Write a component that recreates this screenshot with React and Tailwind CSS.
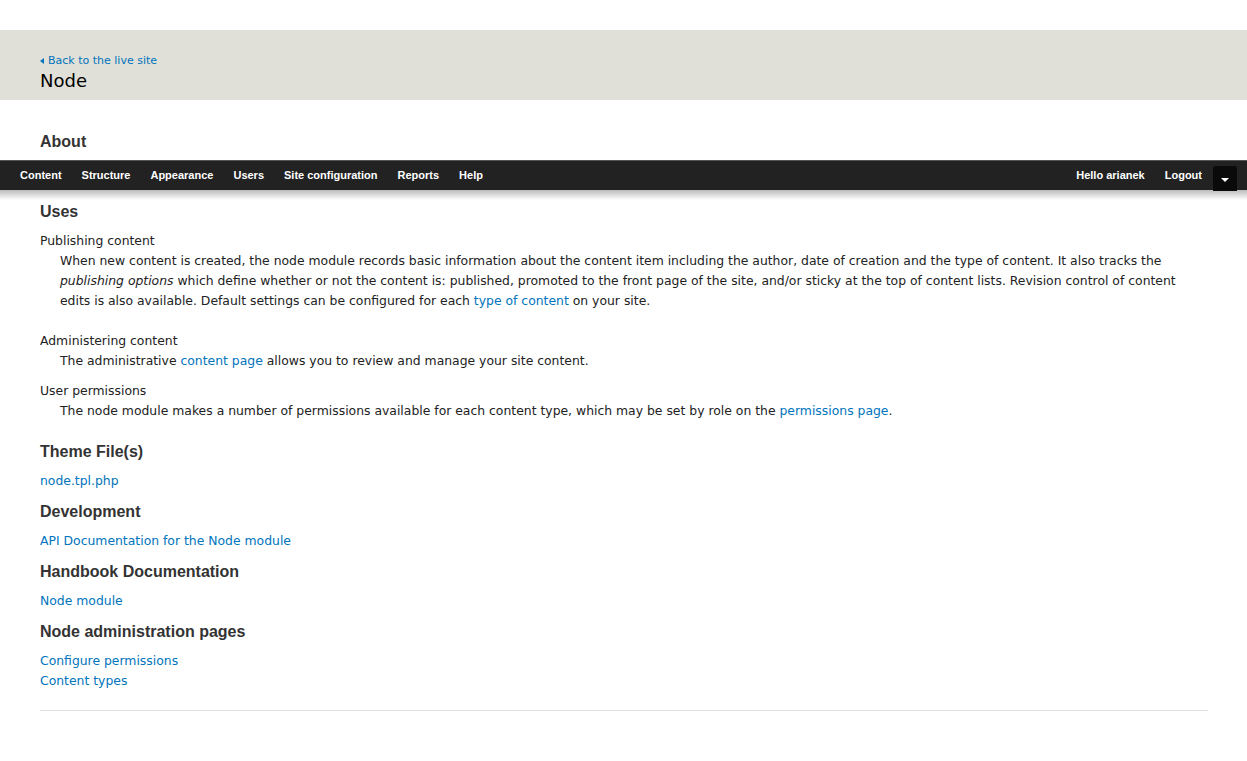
import React from 'react';

const font = { fontFamily: '"DejaVu Sans", "Liberation Sans", sans-serif' };
const headFont = { fontFamily: '"Liberation Sans", Arial, sans-serif' };

function Section({ title, children }) {
  return (
    <div>
      <h2 className="text-[16px] font-bold text-[#333] leading-[20px] mb-[9px]" style={headFont}>{title}</h2>
      {children}
    </div>
  );
}

export default function App() {
  const navItems = ['Content', 'Structure', 'Appearance', 'Users', 'Site configuration', 'Reports', 'Help'];

  return (
    <div className="min-h-screen bg-white text-[#222] text-[12.4px]" style={font}>
      <div className="h-[30px]" />
      {/* page header */}
      <div className="bg-[#e0e0d8] h-[70px] px-[40px] pt-[24px]">
        <a href="#" className="flex items-center gap-[4px] text-[11px] leading-[14px] text-[#0074bd]">
          <span className="inline-block w-0 h-0 border-y-[3.5px] border-y-transparent border-r-[4px] border-r-[#0074bd]" />
          Back to the live site
        </a>
        <h1 className="text-[18px] leading-[24px] mt-[1px] text-black">Node</h1>
      </div>

      <div className="px-[40px] pt-[32px] pb-[8px]">
        <h2 className="text-[16px] font-bold text-[#333] leading-[20px]" style={headFont}>About</h2>
      </div>

      {/* toolbar */}
      <div className="relative">
        <div className="h-[30px] bg-[#222] border-t border-[#555] flex items-center justify-between pl-[20px] pr-[10px]" style={headFont}>
          <ul className="flex gap-[20px] text-white font-bold text-[11px]">
            {navItems.map((n) => (
              <li key={n}>{n}</li>
            ))}
          </ul>
          <div className="flex items-center h-full text-white font-bold text-[11px]">
            <span className="mr-[20px]">Hello arianek</span>
            <span className="mr-[11px]">Logout</span>
            <div className="w-[24px] h-[25px] mt-[5px] bg-[#0a0a0a] rounded-t-[3px] flex items-center justify-center">
              <span className="inline-block mt-[3px] w-0 h-0 border-x-[4px] border-x-transparent border-t-[4px] border-t-white" />
            </div>
          </div>
        </div>
        <div className="h-[10px] bg-gradient-to-b from-[#bbb] to-white" />
      </div>

      <div className="px-[40px] pt-[2px]">
        <h2 className="text-[16px] font-bold text-[#333] leading-[20px] mb-[9px]" style={headFont}>Uses</h2>
        <dl className="leading-[20px]">
          <dt>Publishing content</dt>
          <dd className="pl-[20px] mb-[20px]">
            When new content is created, the node module records basic information about the content item including the author, date of creation and the type of content. It also tracks the <em>publishing options</em> which define whether or not the content is: published, promoted to the front page of the site, and/or sticky at the top of content lists. Revision control of content edits is also available. Default settings can be configured for each <a href="#" className="text-[#0074bd]">type of content</a> on your site.
          </dd>
          <dt>Administering content</dt>
          <dd className="pl-[20px] mb-[10px]">
            The administrative <a href="#" className="text-[#0074bd]">content page</a> allows you to review and manage your site content.
          </dd>
          <dt>User permissions</dt>
          <dd className="pl-[20px]">
            The node module makes a number of permissions available for each content type, which may be set by role on the <a href="#" className="text-[#0074bd]">permissions page</a>.
          </dd>
        </dl>

        <div className="mt-[21px] flex flex-col gap-[11px]">
          <Section title="Theme File(s)">
            <a href="#" className="block text-[#0074bd] leading-[20px]">node.tpl.php</a>
          </Section>
          <Section title="Development">
            <a href="#" className="block text-[#0074bd] leading-[20px]">API Documentation for the Node module</a>
          </Section>
          <Section title="Handbook Documentation">
            <a href="#" className="block text-[#0074bd] leading-[20px]">Node module</a>
          </Section>
          <Section title="Node administration pages">
            <a href="#" className="block text-[#0074bd] leading-[20px]">Configure permissions</a>
            <a href="#" className="block text-[#0074bd] leading-[20px]">Content types</a>
          </Section>
        </div>

        <hr className="mt-[19px] border-t border-[#e0e0e0] w-[1168px]" />
      </div>
    </div>
  );
}
